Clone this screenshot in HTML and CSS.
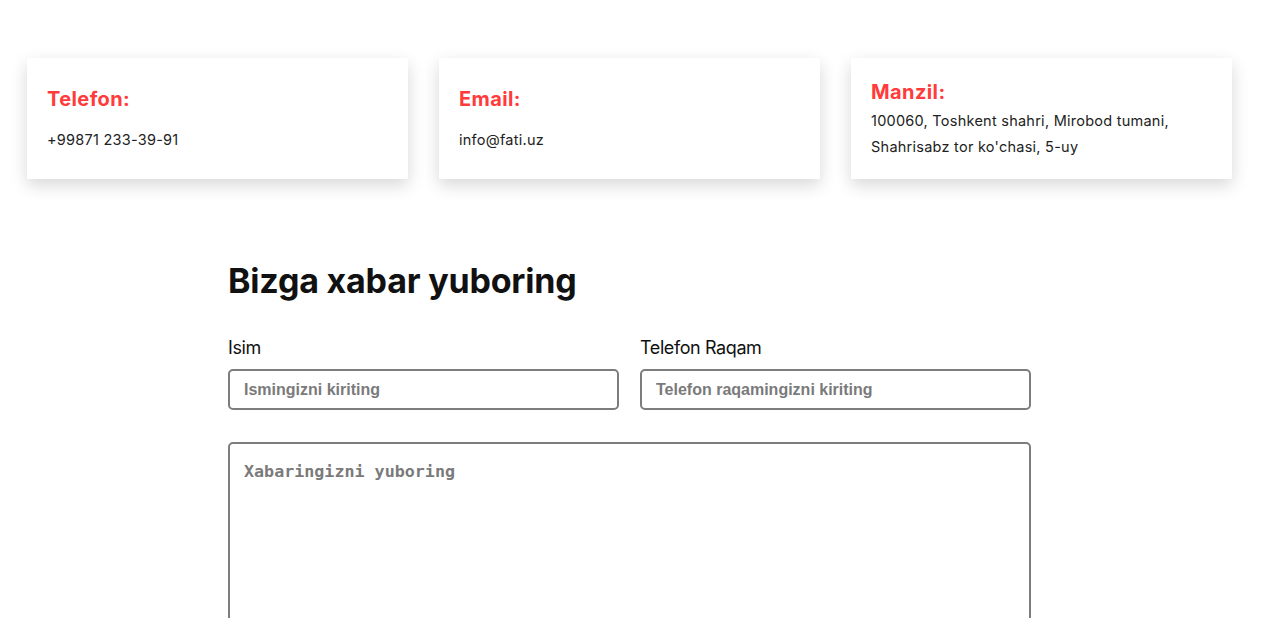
FILE: index.html
```html
<!DOCTYPE html>
<html lang="uz">
<head>
<meta charset="utf-8">
<title>Aloqa</title>
<link rel="stylesheet" href="styles.css">
</head>
<body>
<section class="contacts">
  <div class="card">
    <h3 class="card-title">Telefon:</h3>
    <p class="card-text">+99871 233-39-91</p>
  </div>
  <div class="card">
    <h3 class="card-title">Email:</h3>
    <p class="card-text">info@fati.uz</p>
  </div>
  <div class="card card-tight">
    <h3 class="card-title">Manzil:</h3>
    <p class="card-text">100060, Toshkent shahri, Mirobod tumani,<br>Shahrisabz tor ko'chasi, 5-uy</p>
  </div>
</section>

<section class="message">
  <h2 class="message-title">Bizga xabar yuboring</h2>
  <div class="row">
    <label class="field">
      <span class="field-label">Isim</span>
      <input class="input" type="text" placeholder="Ismingizni kiriting">
    </label>
    <label class="field">
      <span class="field-label">Telefon Raqam</span>
      <input class="input" type="text" placeholder="Telefon raqamingizni kiriting">
    </label>
  </div>
  <textarea class="textarea" placeholder="Xabaringizni yuboring"></textarea>
</section>
</body>
</html>
```

FILE: styles.css
```css
* { box-sizing: border-box; }

body {
  margin: 0;
  background: #fff;
  font-family: Inter, "Noto Sans", sans-serif;
  color: #222;
}

.contacts {
  display: flex;
  gap: 31px;
  padding: 58px 0 0 27px;
}

.card {
  width: 381px;
  height: 121px;
  background: #fff;
  box-shadow: 0 6px 16px rgba(0, 0, 0, 0.16);
  padding: 0 20px;
  display: flex;
  flex-direction: column;
  justify-content: center;
}

.card-title {
  margin: 0 0 14px;
  font-size: 20px;
  line-height: 28px;
  font-weight: 700;
  color: #ff3b3b;
  letter-spacing: 0.4px;
}

.card-tight .card-title { margin-bottom: 2px; }

.card-text {
  margin: 0;
  font-size: 14.5px;
  line-height: 26px;
  color: #222;
  letter-spacing: 0.25px;
}

.message {
  width: 803px;
  margin: 81px 0 0 228px;
}

.message-title {
  margin: 0;
  font-size: 34px;
  line-height: 41px;
  font-weight: 700;
  color: #111;
  letter-spacing: -0.2px;
}

.row {
  display: flex;
  gap: 21px;
  margin-top: 33px;
}

.field {
  flex: 1;
  display: flex;
  flex-direction: column;
  gap: 8px;
}

.field-label {
  font-size: 18px;
  line-height: 27px;
  color: #111;
  letter-spacing: -0.4px;
}

.input {
  height: 41px;
  border: 2px solid #7d7d7d;
  border-radius: 5px;
  padding: 0 14px;
  font-family: "Liberation Sans", Arial, sans-serif;
  font-size: 16px;
  font-weight: 700;
  outline: none;
}

.input::placeholder { color: #7a7a7a; }

.textarea {
  display: block;
  width: 100%;
  height: 220px;
  margin-top: 32px;
  border: 2px solid #7d7d7d;
  border-radius: 5px;
  padding: 17px 14px;
  font-family: "DejaVu Sans Mono", monospace;
  font-size: 16.7px;
  font-weight: 700;
  resize: none;
  outline: none;
}

.textarea::placeholder { color: #7a7a7a; }
```
